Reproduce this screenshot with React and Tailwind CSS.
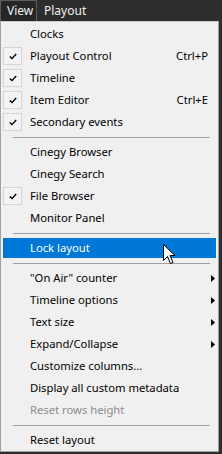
import React from 'react';

const font = { fontFamily: '"Noto Sans", "Liberation Sans", sans-serif' };

function Check() {
  return (
    <svg width="8" height="7" viewBox="0 0 8 7">
      <path d="M0.8 3.4 L3 5.6 L7.2 1" fill="none" stroke="#000" strokeWidth="1.4" />
    </svg>
  );
}

function Arrow() {
  return (
    <svg width="4" height="7" viewBox="0 0 4 7">
      <polygon points="0,0 4,3.5 0,7" fill="#000" />
    </svg>
  );
}

function Item({ label, checked, shortcut, submenu, disabled, active }) {
  return (
    <div className="h-[22px] flex items-center">
      <div
        className={`flex-1 h-[20px] mx-[2px] flex items-center ${
          active ? 'bg-[#0078d7] text-white' : disabled ? 'text-[#8d8d8d]' : 'text-black'
        }`}
      >
        <div className="w-[19px] h-[19px] flex items-center justify-center shrink-0">
          {checked && (
            <div className="w-[19px] h-[18px] border border-[#d4d4d4] bg-[#f3f3f3] flex items-center justify-center">
              <Check />
            </div>
          )}
        </div>
        <span className="ml-[8px] flex-1 whitespace-nowrap leading-none">{label}</span>
        {shortcut && <span className="mr-[8px] whitespace-nowrap leading-none">{shortcut}</span>}
        {submenu && (
          <span className="mr-[1px] flex items-center">
            <Arrow />
          </span>
        )}
      </div>
    </div>
  );
}

function Sep() {
  return (
    <div className="h-[8px] flex items-center">
      <div className="ml-[12px] mr-[8px] flex-1 h-px bg-[#a0a0a0]" />
    </div>
  );
}

export default function App() {
  return (
    <div className="relative w-[222px] h-[454px] bg-[#2d2d2d] text-[11.25px] overflow-hidden" style={font}>
      <div className="h-[21px] flex items-stretch text-[#f0f0f0] text-[12px]">
        <div className="w-[37px] border-x border-t border-[#5d5d5d] bg-[#262626] flex items-center pl-[6px]">
          View
        </div>
        <div className="flex items-center ml-[7px]">Playout</div>
      </div>
      <div className="w-[219px] border border-[#a0a0a0] border-t-[#c8c8c8] bg-[#f0f0f0] pt-px">
        <Item label="Clocks" />
        <Item label="Playout Control" checked shortcut="Ctrl+P" />
        <Item label="Timeline" checked />
        <Item label="Item Editor" checked shortcut="Ctrl+E" />
        <Item label="Secondary events" checked />
        <Sep />
        <Item label="Cinegy Browser" />
        <Item label="Cinegy Search" />
        <Item label="File Browser" checked />
        <Item label="Monitor Panel" />
        <Sep />
        <Item label="Lock layout" active />
        <Sep />
        <Item label={'"On Air" counter'} submenu />
        <Item label="Timeline options" submenu />
        <Item label="Text size" submenu />
        <Item label="Expand/Collapse" submenu />
        <Item label="Customize columns..." />
        <Item label="Display all custom metadata" />
        <Item label="Reset rows height" disabled />
        <Sep />
        <Item label="Reset layout" />
      </div>
      <svg className="absolute left-[163px] top-[244px]" width="13" height="21" viewBox="0 0 13 21">
        <path
          d="M0.5 0.5 L0.5 16.5 L4.5 12.5 L7.5 19.5 L10 18.5 L7 11.5 L12 11.5 Z"
          fill="#fff"
          stroke="#000"
          strokeWidth="1"
        />
      </svg>
    </div>
  );
}
